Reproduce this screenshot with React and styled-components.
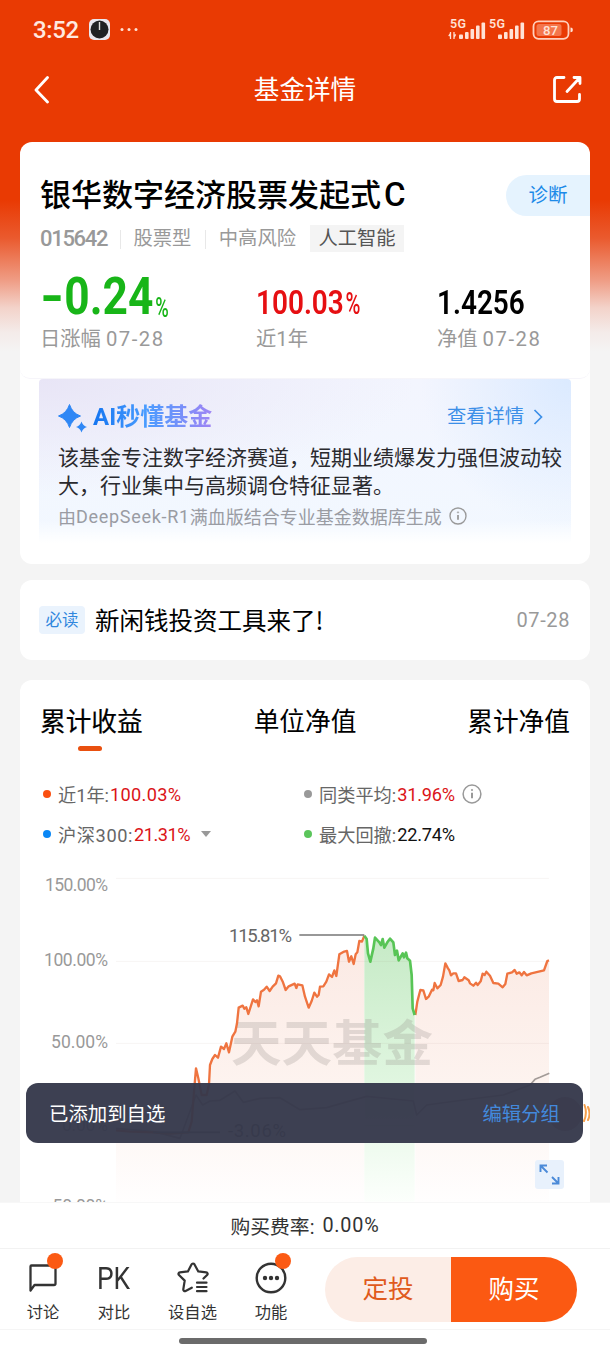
import React from 'react';
import styled, {createGlobalStyle} from 'styled-components';

const GlobalStyle = createGlobalStyle`
  * {
    box-sizing: border-box;
  }
  body {
    margin: 0;
    background: #f4f4f4;
    font-family: Roboto, 'Noto Sans CJK SC', sans-serif;
    color: #000;
  }
  svg {
    display: block;
    flex: none;
  }
`;

const Page = styled.div`
  width: 610px;
  height: 1356px;
  display: flex;
  flex-direction: column;
  overflow: hidden;
  position: relative;
  background: linear-gradient(
    #e93a03 0,
    #e93a03 200px,
    #ea5a2e 238px,
    #ef9c84 280px,
    #f3d3ca 308px,
    #f4ebe9 332px,
    #f4f4f4 352px
  );
`;

const StatusBar = styled.div`
  height: 60px;
  padding: 0 36px 0 33px;
  display: flex;
  align-items: center;
  justify-content: space-between;
  flex: none;
  color: #ffe9e0;
`;

const StatusGroup = styled.div`
  display: flex;
  align-items: center;
`;

const Clock = styled.span`
  width: 55px;
  font-size: 24px;
  font-weight: 500;
  line-height: 28px;
  letter-spacing: -0.4px;
`;

const NavBar = styled.div`
  height: 60px;
  padding: 0 28px 0 33px;
  display: flex;
  align-items: center;
  justify-content: space-between;
  flex: none;
`;

const NavTitle = styled.h1`
  margin: 0;
  padding-left: 7px;
  font-size: 25.6px;
  font-weight: 400;
  line-height: 36px;
  color: #fff;
`;

const Content = styled.div`
  height: 1082px;
  padding: 22px 20px 0;
  overflow: hidden;
  flex: none;
`;

const Card = styled.section`
  height: ${p => p.$height}px;
  margin-bottom: ${p => p.$gap || 0}px;
  border-radius: ${p => (p.$open ? '12px 12px 0 0' : '12px')};
  background: #fff;
  overflow: hidden;
`;

const Summary = styled.div`
  height: 237px;
  padding-left: 20px;
  border-bottom: 1px solid #f6f5fa;
  border-radius: 0 0 10px 10px;
`;

const TitleRow = styled.div`
  padding-top: 32px;
  display: flex;
  align-items: center;
  justify-content: space-between;
`;

const FundName = styled.h2`
  margin: 0;
  font-size: 31px;
  font-weight: 500;
  line-height: 41px;
  white-space: nowrap;
  span {
    margin-left: 3px;
    font-size: 33px;
  }
`;

const Diagnose = styled.div`
  width: 84px;
  height: 41px;
  border-radius: 21px 0 0 21px;
  background: #e5f3fe;
  color: #1c8ae8;
  font-size: 19.5px;
  line-height: 41px;
  text-align: center;
`;

const TagRow = styled.div`
  height: 28px;
  margin-top: 9px;
  display: flex;
  align-items: center;
  color: #999;
  font-size: 19.3px;
  line-height: 28px;
`;

const Code = styled.span`
  width: 80px;
  font-size: 22px;
  font-weight: 500;
  letter-spacing: -1.3px;
`;

const Tag = styled.span`
  margin-right: 14px;
  padding-left: 13.5px;
  background: linear-gradient(#e8e8e8, #e8e8e8) left center / 1px 19px no-repeat;
`;

const Theme = styled.span`
  width: 94px;
  height: 27px;
  margin-top: -1px;
  background: #f4f4f4;
  color: #555;
  line-height: 27px;
  text-align: center;
`;

const Stats = styled.div`
  height: 104px;
  padding-top: 23px;
  display: grid;
  grid-template-columns: 216px 181px 1fr;
`;

const Stat = styled.div`
  height: 78px;
  display: flex;
  flex-direction: column;
`;

const Figure = styled.div`
  height: 50px;
  padding-top: ${p => (p.$big ? 0 : 9)}px;
  transform: scaleX(0.86);
  transform-origin: 0 0;
  color: ${p => p.$color};
  font-size: ${p => (p.$big ? 51.5 : 32.5)}px;
  font-weight: ${p => (p.$big ? 700 : 600)};
  line-height: ${p => (p.$big ? 42 : 36)}px;
  white-space: nowrap;
`;

const Sign = styled.span`
  display: inline-block;
  margin-right: 8px;
  transform: scaleX(1.4);
  transform-origin: 0 50%;
`;

const Percent = styled.span`
  display: inline-block;
  margin-left: 2px;
  transform: scaleX(0.76);
  transform-origin: 0 50%;
  font-size: ${p => (p.$small ? 28 : 31)}px;
  font-weight: 500;
  line-height: 30px;
  vertical-align: ${p => (p.$small ? -3 : 0)}px;
`;

const StatLabel = styled.div`
  height: 26px;
  color: #999;
  font-size: 20.3px;
  line-height: 26px;
  white-space: nowrap;
`;

const Wide = styled.span`
  letter-spacing: ${p => p.$by}px;
`;

const AiBox = styled.div`
  height: 164px;
  margin: 0 19px;
  padding: 17px 0 0 19px;
  border-radius: 4px;
  background:
    linear-gradient(rgba(255, 255, 255, 0) 86%, #fff 100%),
    radial-gradient(circle at 100% 0, #dbeaff 0, rgba(236, 244, 255, 0) 27%),
    radial-gradient(ellipse at 0 0, #e8e5f6 0, rgba(240, 240, 253, 0) 50%),
    linear-gradient(#f3f5fe, #f2f8ff);
`;

const AiHead = styled.div`
  height: 40px;
  padding-right: 28px;
  display: flex;
  align-items: center;
`;

const AiTitle = styled.div`
  margin-left: 5px;
  padding-top: 2px;
  background: linear-gradient(90deg, #1475f0, #4a9cff 45%, #9f84f4);
  -webkit-background-clip: text;
  background-clip: text;
  color: transparent;
  font-size: 24px;
  font-weight: 700;
  line-height: 36px;
`;

const AiLink = styled.div`
  margin-left: auto;
  padding-top: 1px;
  display: flex;
  align-items: center;
  gap: 9px;
  color: #3c8fe8;
  font-size: 19.3px;
  line-height: 30px;
`;

const AiText = styled.p`
  margin: 6px 0 0;
  color: #2a2a2e;
  font-family: 'Noto Sans CJK SC', sans-serif;
  font-size: 21px;
  line-height: 28px;
  white-space: nowrap;
`;

const AiSource = styled.div`
  height: 36px;
  display: flex;
  align-items: center;
  color: #9a9ca3;
  font-size: 18px;
  white-space: nowrap;
  svg {
    margin-left: 7px;
  }
`;

const Notice = styled.div`
  height: 80px;
  padding: 0 20px 0 19px;
  display: flex;
  align-items: center;
`;

const Badge = styled.span`
  width: 46px;
  height: 28px;
  border-radius: 4px;
  background: #eaf3fd;
  color: #3187dd;
  font-size: 16.5px;
  line-height: 29px;
  text-align: center;
`;

const NoticeText = styled.span`
  margin-left: 10px;
  font-family: 'Noto Sans CJK SC', sans-serif;
  font-size: 24.5px;
  line-height: 36px;
`;

const NoticeDate = styled.span`
  margin-left: auto;
  color: #999;
  font-size: 20px;
  letter-spacing: 0.6px;
`;

const Tabs = styled.div`
  height: 74px;
  padding: 24px 20px 0;
  display: flex;
  justify-content: space-between;
`;

const Tab = styled.div`
  display: flex;
  flex-direction: column;
  align-items: center;
  font-size: 25.7px;
  font-weight: 400;
  line-height: 37px;
  -webkit-text-stroke: ${p => (p.$active ? 0.2 : 0)}px #000;
  &::after {
    content: '';
    width: 24px;
    height: 5px;
    margin: 5px 2px 0 0;
    border-radius: 3px;
    background: ${p => (p.$active ? '#e9500f' : 'transparent')};
  }
`;

const Legend = styled.div`
  height: 111px;
  padding: 20px 0 0 23px;
  display: grid;
  grid-template-columns: 261px 1fr;
  grid-auto-rows: 40px;
`;

const LegendItem = styled.div`
  display: flex;
  align-items: center;
  color: #666;
  font-size: 18.2px;
  white-space: nowrap;
  &::before {
    content: '';
    width: 8px;
    height: 8px;
    margin-right: 7px;
    border-radius: 50%;
    background: ${p => p.$dot};
  }
  svg {
    margin-left: 7px;
  }
`;

const LegendValue = styled.span`
  margin-left: 1px;
  color: ${p => p.$color};
  letter-spacing: ${p => p.$spacing || 0}px;
`;

const Toast = styled.div`
  width: 557px;
  height: 60px;
  padding: 0 23px 1px;
  position: absolute;
  left: 26px;
  top: 1083px;
  display: flex;
  align-items: center;
  justify-content: space-between;
  border-radius: 12px;
  background: rgba(53, 56, 75, 0.96);
  color: #fff;
  font-size: 19.4px;
`;

const ToastLink = styled.span`
  color: #4389dc;
`;

const Fee = styled.div`
  height: 47px;
  display: flex;
  align-items: center;
  justify-content: center;
  gap: 8px;
  flex: none;
  border-top: 1px solid #f7f7f7;
  border-bottom: 1px solid #f2f2f2;
  background: #fff;
  color: #333;
  font-size: 19.8px;
`;

const Actions = styled.div`
  height: 81px;
  display: flex;
  flex: none;
  border-bottom: 1px solid #f5f5f5;
  background: #fff;
`;

const Action = styled.div`
  width: ${p => p.$width}px;
  padding-top: 10px;
  display: flex;
  flex: none;
  flex-direction: column;
  align-items: center;
  position: relative;
  color: #333;
  font-size: 16.3px;
  line-height: 22px;
  svg {
    margin-bottom: 5px;
  }
`;

const Dot = styled.i`
  width: 16px;
  height: 16px;
  position: absolute;
  left: 50%;
  top: 4px;
  margin-left: 4px;
  border-radius: 50%;
  background: #fb5a14;
`;

const Pk = styled.div`
  height: 38px;
  margin-bottom: 5px;
  font-size: 31px;
  line-height: 40px;
  transform: scaleX(0.85);
`;

const Pill = styled.div`
  width: 252px;
  height: 65px;
  margin: 8px 0 0 26px;
  display: flex;
  border-radius: 33px;
  overflow: hidden;
`;

const PillHalf = styled.div`
  flex: 1;
  background: ${p => (p.$solid ? '#fb5912' : '#fcede6')};
  color: ${p => (p.$solid ? '#fff' : '#e05a1c')};
  font-size: 25.5px;
  line-height: 65px;
  text-align: center;
`;

const HomeArea = styled.div`
  flex: 1;
  padding: 8px 0 0 179px;
  background: #fff;
`;

const HomeBar = styled.div`
  width: 248px;
  height: 6px;
  border-radius: 3px;
  background: #6b6b6b;
`;

const InfoIcon = ({size, color = '#999'}) => (
  <svg width={size} height={size} viewBox="0 0 20 20" fill="none" stroke={color}>
    <circle cx="10" cy="10" r="8.9" strokeWidth="1.5" />
    <path d="M10 8.8v5.4" strokeWidth="2" />
    <circle cx="10" cy="6" r="0.7" strokeWidth="1" />
  </svg>
);

const StatusIcons = () => (
  <svg width="126" height="26" viewBox="0 0 126 26" fill="#ffe2d6">
    <g fontFamily="Roboto, sans-serif" fontWeight="600" fontSize="12.5">
      <text x="2" y="11" textLength="16">5G</text>
      <text x="41" y="11" textLength="16">5G</text>
    </g>
    <path d="M2.5 15v7M.8 19.2l1.7-2.8M6 22v-7M7.6 17.4L6 20.4" stroke="#ffe2d6" strokeWidth="1.3" />
    {[0, 39].map(dx => (
      <g key={dx} transform={`translate(${dx})`}>
        <rect x="11" y="17.5" width="4" height="4.5" rx="1" />
        <rect x="17" y="15" width="3.6" height="7" rx="1" />
        <rect x="22.5" y="12" width="3.6" height="10" rx="1" />
        <rect x="28" y="8.5" width="3.6" height="13.5" rx="1" />
        <rect x="33.5" y="5.5" width="3.6" height="16.5" rx="1" />
      </g>
    ))}
    <rect x="85.5" y="4.3" width="35" height="17.5" rx="5" fill="none" stroke="#ffd0bd" strokeWidth="1.8" />
    <rect x="88.5" y="7" width="25" height="12" rx="2.5" fill="#f4764c" />
    <path d="M122.500 10.5q2.4 0 2.4 2.4t-2.400 2.400z" />
    <text x="95" y="17.8" fontFamily="Roboto, sans-serif" fontSize="13.5" fontWeight="500" textLength="15" lengthAdjust="spacingAndGlyphs">87</text>
  </svg>
);

const StarIcon = () => (
  <svg width="38" height="38" viewBox="0 0 38 38" fill="none" stroke="#333" strokeWidth="2.2" strokeLinecap="round" strokeLinejoin="round">
    <path d="M29.5 19.5l3.6-3.5c1-1 .5-2.4-.9-2.6l-7.9-1-3.8-7c-.7-1.2-2.4-1.2-3 0l-3.6 7-8 1c-1.4.2-1.9 1.6-.9 2.6l5.7 5.6-1.4 8.6c-.2 1.4 1.1 2.3 2.3 1.7l6.2-3.2" />
    <path d="M23 23.7h9.5M23 28h9.5M23 32.2h9.5" />
  </svg>
);

// Coordinates are on a grid three times finer than the drawn chart.
const rise = [
  [288, 796], [330, 800], [400, 802], [450, 806], [505, 802], [515, 770], [522, 680], [528, 610],
  [535, 640], [545, 690], [560, 690], [567, 658], [570, 600], [577, 582], [585, 570], [594, 578],
  [603, 545], [612, 552], [619, 535], [627, 562], [637, 515], [646, 500], [651, 475], [656, 428],
  [668, 422], [673, 431], [679, 427], [685, 447], [699, 403], [706, 411], [711, 406], [716, 424],
  [723, 380], [732, 374], [740, 365], [749, 378], [758, 365], [768, 355], [775, 332], [780, 334],
  [789, 352], [797, 375], [806, 364], [824, 356], [829, 369], [833, 358], [847, 361], [855, 395],
  [866, 428], [875, 408], [883, 383], [891, 395], [896, 390], [900, 365], [910, 364], [919, 350],
  [927, 328], [936, 336], [943, 316], [949, 333], [958, 268], [970, 261], [981, 258], [987, 290],
  [994, 274], [1001, 297], [1007, 268], [1012, 262], [1018, 228], [1026, 230], [1033, 212]
];
const drawdown = [
  [1033, 212], [1040, 222], [1044, 265], [1051, 290], [1060, 250], [1065, 218], [1078, 232],
  [1083, 240], [1088, 222], [1093, 248], [1102, 232], [1110, 221], [1120, 232], [1125, 270],
  [1131, 257], [1136, 286], [1148, 265], [1152, 277], [1158, 263], [1162, 280], [1170, 287],
  [1175, 330], [1178, 430], [1184, 450]
];
const recovery = [
  [1186, 450], [1192, 410], [1201, 375], [1210, 376], [1218, 402], [1226, 395], [1236, 374],
  [1240, 376], [1244, 354], [1252, 370], [1262, 360], [1269, 335], [1276, 295], [1284, 310],
  [1288, 316], [1293, 331], [1300, 325], [1308, 325], [1316, 348], [1328, 345], [1333, 337],
  [1346, 346], [1350, 355], [1360, 362], [1368, 353], [1373, 360], [1382, 349], [1388, 326],
  [1394, 330], [1399, 320], [1410, 332], [1420, 354], [1435, 356], [1448, 367], [1456, 357],
  [1462, 326], [1476, 322], [1484, 315], [1490, 326], [1498, 322], [1505, 331], [1512, 321],
  [1520, 331], [1534, 325], [1572, 316], [1582, 288], [1587, 286]
];
const index = [
  [288, 790], [400, 800], [480, 820], [528, 690], [548, 720], [570, 708], [600, 706], [645, 678],
  [670, 712], [720, 700], [780, 698], [840, 734], [920, 728], [975, 712], [1040, 694], [1180, 708],
  [1190, 750], [1220, 720], [1330, 705], [1450, 690], [1530, 660], [1545, 643], [1560, 637],
  [1588, 625]
];

const line = points => points.map(p => p.join(',')).join(' ');
const area = points =>
  `${points[0][0]},1010 ${line(points)} ${points[points.length - 1][0]},1010`;

const Chart = () => (
  <svg width="570" height="337" viewBox="0 0 570 337" fontFamily="Roboto, sans-serif">
    <defs>
      <linearGradient id="warm" gradientUnits="userSpaceOnUse" x1="0" y1="210" x2="0" y2="1010">
        <stop offset="0" stopColor="#fbe9e3" />
        <stop offset="0.55" stopColor="#fdf3ef" />
        <stop offset="1" stopColor="#fffefe" />
      </linearGradient>
      <linearGradient id="cool" gradientUnits="userSpaceOnUse" x1="0" y1="210" x2="0" y2="1010">
        <stop offset="0" stopColor="#c6eac6" />
        <stop offset="0.55" stopColor="#e0f6e0" />
        <stop offset="1" stopColor="#fcfffc" />
      </linearGradient>
    </defs>
    <g transform="scale(0.33333)" fill="none">
      <polygon points={area(rise)} fill="url(#warm)" />
      <polygon points={area(recovery)} fill="url(#warm)" />
      <polygon points={area(drawdown)} fill="url(#cool)" />
      <path d="M288 40H1587M288 289H1587M288 535H1587M288 782H1587" stroke="#8a6a60" strokeOpacity="0.07" strokeWidth="3" />
    </g>
    <text x="211" y="196" textLength="202" lengthAdjust="spacingAndGlyphs" fontFamily="'Noto Sans CJK SC', sans-serif" fontWeight="700" fontSize="49" fill="#8d8482" fillOpacity="0.24">天天基金</text>
    <g transform="scale(0.33333)" fill="none" strokeLinejoin="round">
      <polyline points={line(index)} stroke="#a39b98" strokeWidth="5" />
      <polyline points={line(rise)} stroke="#ef7440" strokeWidth="7" />
      <polyline points={line(recovery)} stroke="#ef7440" strokeWidth="7" />
      <polyline points={line(drawdown)} stroke="#58c556" strokeWidth="8" />
      <path d="M838 210H1033M400 802H600" stroke="#777" strokeWidth="5" />
    </g>
    <g fontSize="17.5" fill="#999" textAnchor="end">
      <text x="88" y="26" textLength="63">150.00%</text>
      <text x="88" y="101" textLength="64">100.00%</text>
      <text x="88" y="183" textLength="57">50.00%</text>
      <text x="88" y="266" textLength="46">0.00%</text>
      <text x="88" y="347" textLength="60">-50.00%</text>
    </g>
    <g fontSize="18.5" fill="#666">
      <text x="209" y="77" textLength="63">115.81%</text>
      <text x="208" y="272" textLength="58">-3.06%</text>
    </g>
    <circle cx="545" cy="249" r="17" fill="#6b1b22" fillOpacity="0.45" />
    <path d="M564.5 240q3 8-.5 16M568 242q3 7 0 13" fill="none" stroke="#f6a04c" strokeWidth="2" strokeLinecap="round" />
    <rect x="515" y="295" width="29" height="29" rx="3" fill="#e8f1fc" />
    <path d="M520.5 307v-6.5h6.5M521 301l6.500 6.5M538.5 312v6.5h-6.5M538 318l-6-6" fill="none" stroke="#4a8ad8" strokeWidth="1.9" />
  </svg>
);

const App = () => (
  <Page>
    <GlobalStyle />
    <StatusBar>
      <StatusGroup>
        <Clock>3:52</Clock>
        <svg width="50" height="24" viewBox="0 0 50 24">
          <rect x="1" y="1" width="21" height="21" rx="5" fill="#e9e7ef" />
          <circle cx="11.5" cy="11.5" r="9" fill="#202124" />
          <path d="M11.5 4v8" stroke="#ddd" strokeWidth="1.4" />
          <circle cx="34" cy="11.5" r="1.5" fill="#ffe2d6" />
          <circle cx="41" cy="11.5" r="1.5" fill="#ffe2d6" />
          <circle cx="48" cy="11.5" r="1.5" fill="#ffe2d6" />
        </svg>
      </StatusGroup>
      <StatusIcons />
    </StatusBar>
    <NavBar>
      <svg width="18" height="28" viewBox="0 0 18 28" fill="none" stroke="#fff" strokeWidth="2.8" strokeLinecap="round" strokeLinejoin="round">
        <path d="M14.5 1.5L3 14l11.5 12" />
      </svg>
      <NavTitle>基金详情</NavTitle>
      <svg width="30" height="30" viewBox="0 0 30 30" fill="none" stroke="#fff" strokeWidth="2.8" strokeLinecap="round" strokeLinejoin="round">
        <path d="M12 2.5H5q-2.5 0-2.5 2.5v19q0 2.5 2.5 2.5h20q2.5 0 2.5-2.5v-4.5M15 16.5L27.5 3M22 2.5h6v6" />
      </svg>
    </NavBar>

    <Content>
      <Card $height={422} $gap={16}>
        <Summary>
          <TitleRow>
            <FundName>银华数字经济股票发起式<span>C</span></FundName>
            <Diagnose>诊断</Diagnose>
          </TitleRow>
          <TagRow>
            <Code>015642</Code>
            <Tag>股票型</Tag>
            <Tag>中高风险</Tag>
            <Theme>人工智能</Theme>
          </TagRow>
          <Stats>
            <Stat>
              <Figure $big $color="#18b518"><Sign>-</Sign>0.24<Percent $small>%</Percent></Figure>
              <StatLabel>日涨幅 <Wide $by={1.5}>07-28</Wide></StatLabel>
            </Stat>
            <Stat>
              <Figure $color="#e60f12">100.03<Percent>%</Percent></Figure>
              <StatLabel>近1年</StatLabel>
            </Stat>
            <Stat>
              <Figure $color="#000">1.4256</Figure>
              <StatLabel>净值 <Wide $by={1.5}>07-28</Wide></StatLabel>
            </Stat>
          </Stats>
        </Summary>
        <AiBox>
          <AiHead>
            <svg width="30" height="34" viewBox="0 0 30 34" fill="#2f87f5">
              <path d="M11.5 5.5q2.8 8.7 11 11.5-8.2 2.8-11 11.5-2.8-8.7-11-11.5 8.2-2.8 11-11.5z" stroke="#2f87f5" strokeLinejoin="round" />
              <path d="M23.5 22.5q1.4 4.1 5.5 5.5-4.1 1.4-5.5 5.5-1.4-4.1-5.5-5.5 4.1-1.4 5.5-5.5z" />
            </svg>
            <AiTitle>AI秒懂基金</AiTitle>
            <AiLink>
              查看详情
              <svg width="10" height="16" viewBox="0 0 10 16" fill="none" stroke="#3c8fe8" strokeWidth="1.7">
                <path d="M1.5 1l7 7-7 7" />
              </svg>
            </AiLink>
          </AiHead>
          <AiText>
            该基金专注数字经济赛道，短期业绩爆发力强但波动较
            <br />
            大，行业集中与高频调仓特征显著。
          </AiText>
          <AiSource>
            由<Wide $by={0.7}>DeepSeek-R1</Wide>满血版结合专业基金数据库生成
            <InfoIcon size={18} />
          </AiSource>
        </AiBox>
      </Card>

      <Card $height={80} $gap={20}>
        <Notice>
          <Badge>必读</Badge>
          <NoticeText>新闲钱投资工具来了!</NoticeText>
          <NoticeDate>07-28</NoticeDate>
        </Notice>
      </Card>

      <Card $height={522} $open>
        <Tabs>
          <Tab $active>累计收益</Tab>
          <Tab>单位净值</Tab>
          <Tab>累计净值</Tab>
        </Tabs>
        <Legend>
          <LegendItem $dot="#fa4f10">
            近1年:<LegendValue $color="#db1418" $spacing={0.3}>100.03%</LegendValue>
          </LegendItem>
          <LegendItem $dot="#999">
            同类平均:<LegendValue $color="#db1418" $spacing={-0.2}>31.96%</LegendValue>
            <InfoIcon size={20} />
          </LegendItem>
          <LegendItem $dot="#0a87f5">
            <Wide $by={0.6}>沪深300:</Wide>
            <LegendValue $color="#db1418" $spacing={-0.5}>21.31%</LegendValue>
            <svg width="18" height="10" viewBox="0 0 18 10" fill="#999">
              <path d="M4 2h10L9 8z" />
            </svg>
          </LegendItem>
          <LegendItem $dot="#5bc55b">
            最大回撤:<LegendValue $color="#111" $spacing={-0.2}>22.74%</LegendValue>
          </LegendItem>
        </Legend>
        <Chart />
      </Card>
    </Content>

    <Fee>
      <span>购买费率:</span>
      <Wide $by={0.8}>0.00%</Wide>
    </Fee>
    <Actions>
      <Action $width={86}>
        <svg width="38" height="38" viewBox="0 0 38 38" fill="none" stroke="#333" strokeWidth="2.3" strokeLinejoin="round">
          <path d="M7.5 6.5h22q2 0 2 2v16q0 1.500-1.5 1.5H10.5L6.5 31.5V7.5q0-1 1-1z" />
        </svg>
        <Dot />
        讨论
      </Action>
      <Action $width={56}>
        <Pk>PK</Pk>
        对比
      </Action>
      <Action $width={101}>
        <StarIcon />
        设自选
      </Action>
      <Action $width={56}>
        <svg width="38" height="38" viewBox="0 0 38 38" fill="none" stroke="#333" strokeWidth="2.4">
          <circle cx="19" cy="19" r="14.3" />
          <g fill="#333" stroke="none">
            <circle cx="13" cy="19" r="2.2" />
            <circle cx="19" cy="19" r="2.2" />
            <circle cx="25" cy="19" r="2.2" />
          </g>
        </svg>
        <Dot />
        功能
      </Action>
      <Pill>
        <PillHalf>定投</PillHalf>
        <PillHalf $solid>购买</PillHalf>
      </Pill>
    </Actions>
    <HomeArea>
      <HomeBar />
    </HomeArea>

    <Toast>
      <span>已添加到自选</span>
      <ToastLink>编辑分组</ToastLink>
    </Toast>
  </Page>
);

export default App;
